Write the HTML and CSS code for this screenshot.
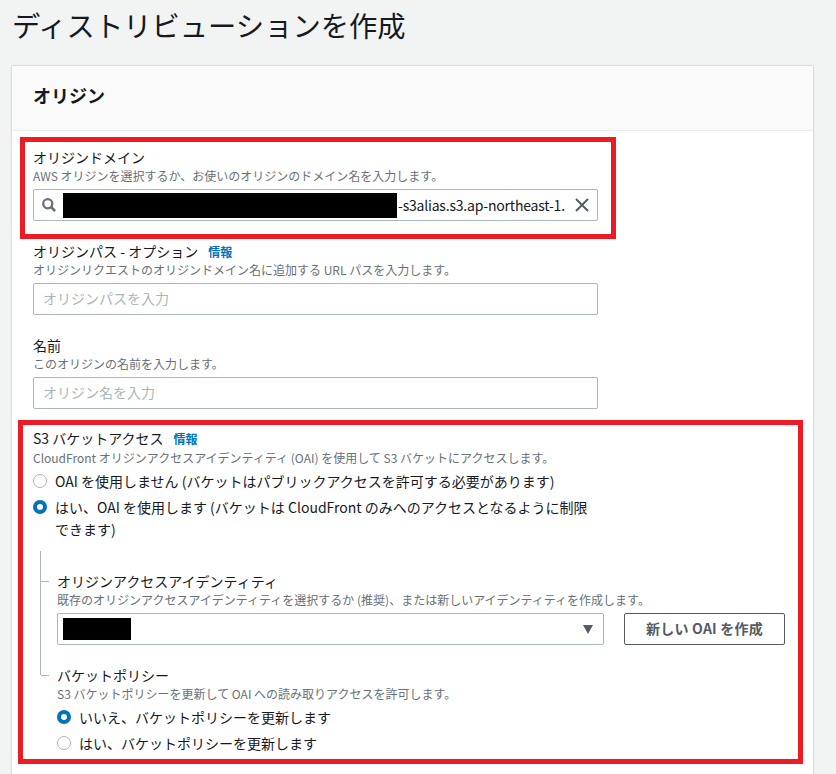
FILE: index.html
```html
<!DOCTYPE html>
<html lang="ja">
<head>
<meta charset="utf-8">
<title>ディストリビューションを作成</title>
<link rel="stylesheet" href="styles.css">
</head>
<body>
<h1 class="page-title">ディストリビューションを作成</h1>
<section class="card">
  <header class="card-header"><h2 class="card-title">オリジン</h2></header>
  <div class="card-body">
    <div class="frame frame-domain">
      <div class="label">オリジンドメイン</div>
      <div class="desc">AWS オリジンを選択するか、お使いのオリジンのドメイン名を入力します。</div>
      <div class="input input-domain">
        <svg class="icon-search" viewBox="0 0 16 16" width="14" height="14"><circle cx="6.6" cy="6.6" r="5.2" fill="none" stroke="#687078" stroke-width="2.6"/><path d="M10.3 10.3 L15 15" stroke="#687078" stroke-width="3" fill="none"/></svg>
        <span class="redact redact-domain"></span>
        <span class="domain-text">-s3alias.s3.ap-northeast-1.</span>
        <svg class="icon-clear" viewBox="0 0 16 16" width="16" height="16"><path d="M2 2 L14 14 M14 2 L2 14" stroke="#545b64" stroke-width="2" fill="none"/></svg>
      </div>
    </div>

    <div class="field field-path">
      <div class="label">オリジンパス - オプション<a class="info">情報</a></div>
      <div class="desc">オリジンリクエストのオリジンドメイン名に追加する URL パスを入力します。</div>
      <div class="input placeholder">オリジンパスを入力</div>
    </div>

    <div class="field field-name">
      <div class="label">名前</div>
      <div class="desc">このオリジンの名前を入力します。</div>
      <div class="input placeholder">オリジン名を入力</div>
    </div>

    <div class="frame frame-s3">
      <div class="label label-s3">S3 バケットアクセス<a class="info">情報</a></div>
      <div class="desc">CloudFront オリジンアクセスアイデンティティ (OAI) を使用して S3 バケットにアクセスします。</div>
      <div class="radio radio-first"><span class="dot"></span><span>OAI を使用しません (バケットはパブリックアクセスを許可する必要があります)</span></div>
      <div class="radio radio-wrap"><span class="dot on"></span><span>はい、OAI を使用します (バケットは CloudFront のみへのアクセスとなるように制限できます)</span></div>

      <div class="nested">
        <div class="sub sub-oai">
          <div class="label">オリジンアクセスアイデンティティ</div>
          <div class="desc">既存のオリジンアクセスアイデンティティを選択するか (推奨)、または新しいアイデンティティを作成します。</div>
          <div class="select-row">
            <div class="input select">
              <span class="redact redact-oai"></span>
              <span class="caret"></span>
            </div>
            <button class="btn" type="button">新しい OAI を作成</button>
          </div>
        </div>
        <div class="sub sub-policy">
          <div class="label">バケットポリシー</div>
          <div class="desc">S3 バケットポリシーを更新して OAI への読み取りアクセスを許可します。</div>
          <div class="radio radio-policy"><span class="dot on"></span><span>いいえ、バケットポリシーを更新します</span></div>
          <div class="radio radio-policy"><span class="dot"></span><span>はい、バケットポリシーを更新します</span></div>
        </div>
      </div>
    </div>
  </div>
</section>
</body>
</html>
```
FILE: styles.css
```css
* { box-sizing: border-box; }
html, body { margin: 0; padding: 0; height: 774px; overflow: hidden; }
body {
  background: #f2f3f3;
  color: #16191f;
  font-family: "Noto Sans CJK JP", "Noto Sans", sans-serif;
  font-size: 14px;
}
.page-title {
  margin: 0;
  padding: 5px 0 0 12px;
  height: 66px;
  font-size: 28.3px;
  line-height: 40px;
  font-weight: 400;
  color: #16191f;
}
.card {
  margin-left: 12px;
  width: 801px;
  height: 720px;
  background: #fff;
  box-shadow: 0 0 2px rgba(0, 28, 36, 0.3);
}
.card-header {
  height: 65px;
  padding: 0 0 6px 21px;
  background: #fafafa;
  border-bottom: 1px solid #eaeded;
  display: flex;
  align-items: center;
}
.card-title { margin: 0; font-size: 18px; line-height: 24px; font-weight: 700; }
.card-body { padding: 6px 0 0 8px; }
.frame { border: 5px solid #ed1c24; }
.frame-domain { width: 596px; height: 102px; padding: 5px 0 0 8px; }
.frame-s3 { width: 785px; height: 344px; padding: 3px 0 0 10px; margin: 11px 0 0 -2px; }
.label { font-size: 14px; line-height: 20px; margin-bottom: 1px; color: #16191f; }
.label-s3 { margin-bottom: 2px; }
.desc { font-size: 12px; line-height: 16px; color: #687078; }
.info { margin-left: 10px; font-size: 12px; line-height: 16px; font-weight: 700; color: #0073bb; }
.input {
  width: 565px;
  height: 32px;
  margin-top: 5px;
  border: 1px solid #aab7b8;
  border-radius: 2px;
  background: #fff;
  display: flex;
  align-items: center;
  line-height: 20px;
}
.input-domain { padding-left: 8px; }
.icon-search { flex: none; }
.redact { display: block; background: #000; flex: none; }
.redact-domain { width: 334px; height: 25px; margin-left: 7px; }
.domain-text { margin-left: 1px; font-size: 14px; letter-spacing: -0.2px; white-space: nowrap; color: #16191f; }
.icon-clear { flex: none; margin-left: auto; margin-right: 7px; }
.placeholder { padding: 0 0 2px 9px; color: #aab7b8; }
.field { padding-left: 13px; }
.field-path { margin-top: 2px; }
.field-name { margin-top: 20px; }
.radio { display: flex; gap: 8px; line-height: 22px; color: #16191f; }
.radio-first { margin-top: 4px; }
.radio-wrap { margin-top: 4px; width: 562px; }
.dot {
  flex: none;
  width: 14px;
  height: 14px;
  margin-top: 4px;
  border-radius: 50%;
  border: 1px solid #aab7b8;
  background: #fff;
}
.dot.on { border: 4px solid #0073bb; }
.nested {
  margin-top: 11px;
  margin-left: 7px;
  border-left: 1px solid #aab7b8;
  height: 124px;
  width: 745px;
}
.sub { position: relative; padding-left: 16px; }
.sub::before {
  content: "";
  position: absolute;
  left: 0;
  top: 10px;
  width: 8px;
  height: 1px;
  background: #aab7b8;
}
.sub-oai { padding-top: 20px; }
.sub-oai::before { top: 30px; }
.sub-policy { margin-top: 20px; }
.select-row { display: flex; gap: 20px; align-items: flex-start; margin-top: 5px; }
.select { width: 547px; margin-top: 0; padding-left: 5px; }
.redact-oai { width: 68px; height: 22px; }
.caret {
  margin-left: auto;
  margin-right: 10px;
  width: 0;
  height: 0;
  border-left: 5px solid transparent;
  border-right: 5px solid transparent;
  border-top: 9px solid #545b64;
}
.btn {
  width: 161px;
  height: 32px;
  padding: 0 0 2px;
  border: 1px solid #545b64;
  border-radius: 2px;
  background: #fff;
  color: #545b64;
  letter-spacing: 0.2px;
  font: 700 14px/20px "Noto Sans CJK JP", "Noto Sans", sans-serif;
}
.radio-policy { margin-top: 4px; }
```
